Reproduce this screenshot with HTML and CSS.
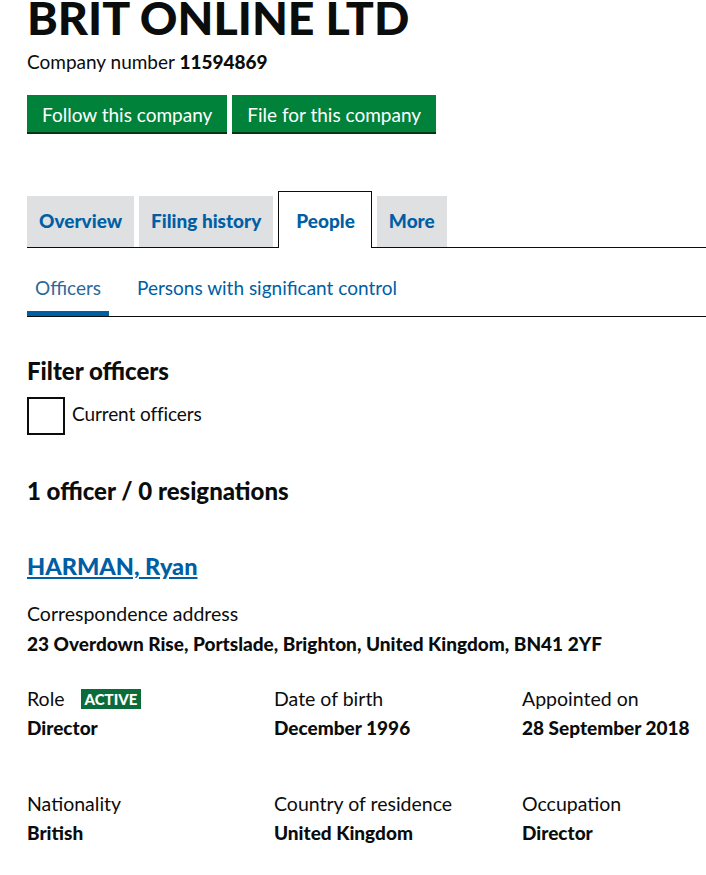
FILE: index.html
```html
<!DOCTYPE html>
<html lang="en">
<head>
    <meta charset="UTF-8">
    <meta name="viewport" content="width=device-width, initial-scale=1.0">
    <title>BRIT ONLINE LTD - People</title>
    <link rel="stylesheet" href="styles.css">
</head>
<body>
    <div class="page">
        <h1 class="company-name">BRIT ONLINE LTD</h1>
        <p class="company-number">Company number <strong>11594869</strong></p>

        <div class="actions">
            <a class="button" href="#">Follow this company</a>
            <a class="button" href="#">File for this company</a>
        </div>

        <ul class="tabs">
            <li class="tab"><a href="#">Overview</a></li>
            <li class="tab"><a href="#">Filing history</a></li>
            <li class="tab tab-active"><a href="#">People</a></li>
            <li class="tab"><a href="#">More</a></li>
        </ul>

        <ul class="subtabs">
            <li class="subtab subtab-active"><a href="#">Officers</a></li>
            <li class="subtab"><a href="#">Persons with significant control</a></li>
        </ul>

        <h2 class="heading">Filter officers</h2>
        <label class="checkbox">
            <input type="checkbox">
            <span class="checkbox-box"></span>
            <span class="checkbox-label">Current officers</span>
        </label>

        <h2 class="heading count">1 officer / 0 resignations</h2>

        <div class="officer">
            <h2 class="officer-name"><a href="#">HARMAN, Ryan</a></h2>

            <dl class="field">
                <dt>Correspondence address</dt>
                <dd>23 Overdown Rise, Portslade, Brighton, United Kingdom, BN41 2YF</dd>
            </dl>

            <div class="grid">
                <dl class="field">
                    <dt>Role <span class="status-tag">Active</span></dt>
                    <dd>Director</dd>
                </dl>
                <dl class="field">
                    <dt>Date of birth</dt>
                    <dd>December 1996</dd>
                </dl>
                <dl class="field">
                    <dt>Appointed on</dt>
                    <dd>28 September 2018</dd>
                </dl>
            </div>

            <div class="grid">
                <dl class="field">
                    <dt>Nationality</dt>
                    <dd>British</dd>
                </dl>
                <dl class="field">
                    <dt>Country of residence</dt>
                    <dd>United Kingdom</dd>
                </dl>
                <dl class="field">
                    <dt>Occupation</dt>
                    <dd>Director</dd>
                </dl>
            </div>
        </div>
    </div>
</body>
</html>
```

FILE: styles.css
```css
body {
    margin: 0;
    font-family: Lato, "Liberation Sans", sans-serif;
    color: #0b0c0c;
    background-color: #fff;
    overflow: hidden;
}

.page {
    padding-left: 27px;
}

.company-name {
    margin: -8px 0 0;
    font-size: 46.5px;
    line-height: 50px;
    font-weight: 900;
}

.company-number {
    margin: 8px 0 0;
    font-size: 19px;
    line-height: 24px;
}

.company-number strong {
    font-weight: 900;
}

.actions {
    display: flex;
    gap: 5px;
    margin-top: 21px;
}

.button {
    display: block;
    padding: 0 15px;
    height: 37px;
    line-height: 40px;
    font-size: 19px;
    color: #fff;
    text-decoration: none;
    background-color: #00823b;
    border-bottom: 2px solid #003618;
}

.tabs {
    display: flex;
    align-items: flex-end;
    gap: 5px;
    margin: 57px 0 0;
    padding: 0;
    list-style: none;
    border-bottom: 1px solid #0b0c0c;
}

.tab a {
    display: block;
    height: 51px;
    padding: 0 12px;
    line-height: 49px;
    font-size: 19px;
    font-weight: 900;
    color: #005ea5;
    text-decoration: none;
    background-color: #dee0e2;
}

.tab-active {
    margin-bottom: -1px;
}

.tab-active a {
    height: 56px;
    padding: 0 16px 0 17px;
    line-height: 57px;
    background-color: #fff;
    border: 1px solid #0b0c0c;
    border-bottom: none;
}

.subtabs {
    display: flex;
    gap: 28px;
    margin: 26px 0 0;
    padding: 0;
    list-style: none;
    border-bottom: 1px solid #0b0c0c;
}

.subtab a {
    display: block;
    padding: 0 0 14px;
    font-size: 19px;
    line-height: 28px;
    color: #005ea5;
    text-decoration: none;
}

.subtab-active a {
    padding: 0 8px 9px;
    border-bottom: 5px solid #005ea5;
    color: #2b6a98;
}

.heading {
    margin: 39px 0 0;
    font-size: 24px;
    line-height: 30px;
    font-weight: 900;
}

.checkbox {
    display: flex;
    align-items: center;
    gap: 7px;
    margin-top: 11px;
    font-size: 19px;
}

.checkbox input {
    display: none;
}

.checkbox-box {
    width: 34px;
    height: 34px;
    border: 2px solid #0b0c0c;
}

.checkbox-label {
    padding-bottom: 5px;
    letter-spacing: -0.1px;
}

.count {
    margin-top: 41px;
}

.officer-name {
    margin: 45px 0 0;
    font-size: 23.5px;
    line-height: 30px;
    font-weight: 900;
}

.officer-name a {
    color: #005ea5;
}

.field {
    margin: 0;
}

.officer-name + .field {
    margin-top: 20px;
}

.field dt {
    font-size: 19.5px;
    line-height: 26px;
}

.field dd {
    margin: 4px 0 0;
    font-size: 19px;
    line-height: 26px;
    font-weight: 900;
}

.grid {
    display: grid;
    grid-template-columns: 247px 248px auto;
    margin-top: 29px;
}

.grid .field dd {
    margin-top: 3px;
}

.grid + .grid {
    margin-top: 50px;
}

.status-tag {
    display: inline-block;
    margin-left: 11px;
    padding: 0 4px;
    font-size: 15px;
    line-height: 20px;
    font-weight: 900;
    text-transform: uppercase;
    color: #fff;
    background-color: #0b6b3a;
    vertical-align: 1px;
}
```
